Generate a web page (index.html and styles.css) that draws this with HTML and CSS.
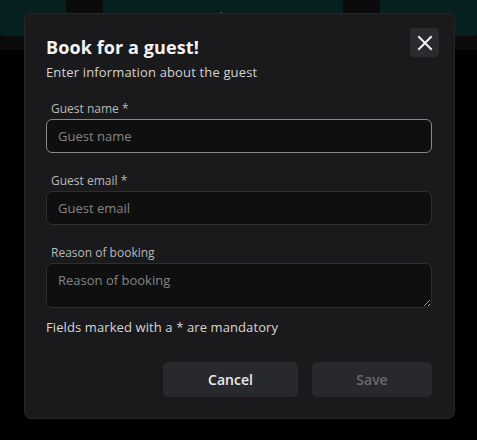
FILE: index.html
```html
<!DOCTYPE html>
<html>
	<head>
		<meta charset="utf-8">
		<title>Book for a guest</title>
		<link rel="stylesheet" href="styles.css">
	</head>
	<body>
		<div class="page">
			<div class="topbar">
				<div class="tab tab_left"></div>
				<div class="tab tab_mid"><span class="tab_dot"></span></div>
				<div class="tab tab_right"></div>
			</div>
		</div>

		<div class="modal">
			<div class="modal_head">
				<div>
					<h2 class="modal_title">Book for a guest!</h2>
					<p class="modal_sub">Enter information about the guest</p>
				</div>
				<button class="modal_close" type="button">
					<svg width="16" height="16" viewBox="0 0 16 16">
						<path d="M2 2 L14 14 M14 2 L2 14" stroke="#f2f2f2" stroke-width="2" stroke-linecap="square" fill="none"/>
					</svg>
				</button>
			</div>

			<div class="field">
				<label class="field_label">Guest name *</label>
				<input class="field_input is_focus" type="text" placeholder="Guest name">
			</div>
			<div class="field">
				<label class="field_label">Guest email *</label>
				<input class="field_input" type="text" placeholder="Guest email">
			</div>
			<div class="field">
				<label class="field_label">Reason of booking</label>
				<textarea class="field_input field_area" placeholder="Reason of booking"></textarea>
			</div>

			<p class="modal_note">Fields marked with a * are mandatory</p>

			<div class="modal_foot">
				<button class="btn btn_cancel" type="button">Cancel</button>
				<button class="btn btn_save" type="button" disabled>Save</button>
			</div>
		</div>
	</body>
</html>
```

FILE: styles.css
```css
html, body {
	margin: 0;
	padding: 0;
}
body {
	width: 477px;
	height: 440px;
	background: #000;
	overflow: hidden;
	font-family: "Open Sans", "Liberation Sans", sans-serif;
	position: relative;
}

/* page behind the overlay */
.page {
	height: 440px;
}
.topbar {
	height: 50px;
	background: #0b0b0b;
	display: flex;
	align-items: flex-start;
}
.tab {
	height: 36px;
	background: #05201e;
	border-radius: 0 0 4px 4px;
	position: relative;
}
.tab_left {
	width: 66px;
}
.tab_mid {
	width: 240px;
	margin-left: 37px;
}
.tab_right {
	flex: 1;
	margin-left: 37px;
}
.tab_dot {
	position: absolute;
	left: 117px;
	top: 12px;
	width: 2px;
	height: 2px;
	background: #3a4a48;
}

/* dialog */
.modal {
	position: absolute;
	left: 24px;
	top: 13px;
	width: 431px;
	height: 406px;
	box-sizing: border-box;
	background: #1a1a1c;
	border: 1px solid #262628;
	border-radius: 7px;
	padding: 14px 22px 0 21px;
}
.modal_head {
	display: flex;
	justify-content: space-between;
	align-items: flex-start;
}
.modal_title {
	margin: 7px 0 0;
	font-size: 18px;
	line-height: 24px;
	font-weight: 700;
	color: #f4f4f4;
	letter-spacing: 0.1px;
}
.modal_sub {
	margin: 4px 0 0;
	font-size: 13px;
	line-height: 18px;
	color: #d2d2d2;
	letter-spacing: 0.15px;
}
.modal_close {
	width: 29px;
	height: 29px;
	margin: 0 -7px 0 0;
	padding: 0;
	border: 0;
	border-radius: 4px;
	background: #2a2b2e;
	display: flex;
	align-items: center;
	justify-content: center;
}

.field {
	margin-top: 20px;
}
.field + .field {
	margin-top: 20px;
}
.field_label {
	display: block;
	padding-left: 5px;
	font-size: 12px;
	line-height: 16px;
	color: #b8b8b8;
	margin-bottom: 2px;
}
.field_input {
	display: block;
	width: 100%;
	height: 34px;
	box-sizing: border-box;
	background: #0f0f10;
	border: 1px solid #2e2e30;
	border-radius: 6px;
	padding: 0 11px;
	font-family: inherit;
	font-size: 13px;
	color: #e0e0e0;
	outline: none;
}
.field_input::placeholder {
	color: #858585;
}
.field_input.is_focus {
	border-color: #8a8a8a;
}
.field_area {
	height: 45px;
	padding-top: 7px;
	resize: vertical;
}

.modal_note {
	margin: 10px 0 0;
	font-size: 13px;
	line-height: 18px;
	color: #d6d6d6;
	letter-spacing: 0.1px;
}

.modal_foot {
	display: flex;
	justify-content: flex-end;
	gap: 14px;
	margin-top: 26px;
}
.btn {
	height: 35px;
	border: 0;
	border-radius: 5px;
	background: #27292d;
	font-family: inherit;
	font-size: 14px;
	font-weight: 600;
}
.btn_cancel {
	width: 135px;
	color: #ececec;
}
.btn_save {
	width: 120px;
	color: #6a6b6e;
}
```
